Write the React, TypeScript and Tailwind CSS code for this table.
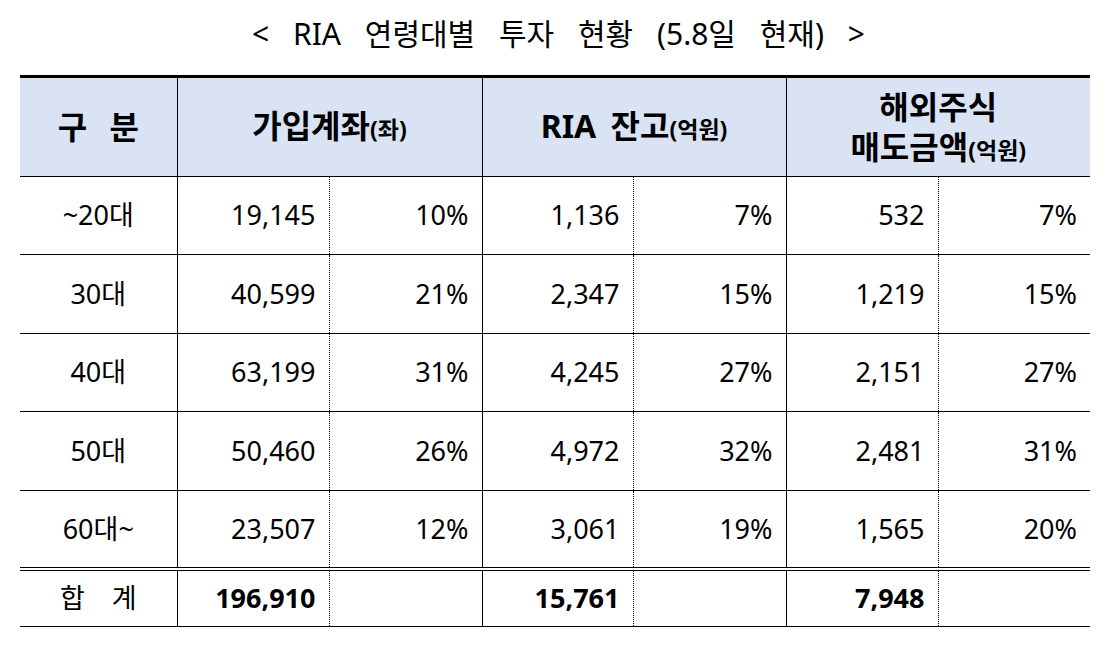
import React from 'react';

type Row = {
  label: string;
  accounts: string;
  accountsPct: string;
  balance: string;
  balancePct: string;
  sales: string;
  salesPct: string;
};

const rows: Row[] = [
  { label: '~20대', accounts: '19,145', accountsPct: '10%', balance: '1,136', balancePct: '7%', sales: '532', salesPct: '7%' },
  { label: '30대', accounts: '40,599', accountsPct: '21%', balance: '2,347', balancePct: '15%', sales: '1,219', salesPct: '15%' },
  { label: '40대', accounts: '63,199', accountsPct: '31%', balance: '4,245', balancePct: '27%', sales: '2,151', salesPct: '27%' },
  { label: '50대', accounts: '50,460', accountsPct: '26%', balance: '4,972', balancePct: '32%', sales: '2,481', salesPct: '31%' },
  { label: '60대~', accounts: '23,507', accountsPct: '12%', balance: '3,061', balancePct: '19%', sales: '1,565', salesPct: '20%' },
];

const font = { fontFamily: '"Noto Sans", "Noto Sans CJK KR", sans-serif' };

export default function App() {
  const num = 'text-right pr-[13px] border-b border-black';
  const solidR = 'border-r border-r-black';
  const dotR = 'border-r border-r-black [border-right-style:dotted]';

  return (
    <div className="w-[1117px] h-[647px] bg-white text-black" style={font}>
      {/* Title */}
      <h1 className="pt-[13px] h-[75px] text-center text-[30px] leading-[42px] font-normal [word-spacing:16px]">
        &lt; RIA 연령대별 투자 현황 (5.8일 현재) &gt;
      </h1>

      <table className="ml-[20px] w-[1070px] table-fixed border-collapse">
        <colgroup>
          <col className="w-[157px]" />
          <col className="w-[152px]" />
          <col className="w-[153px]" />
          <col className="w-[151px]" />
          <col className="w-[153px]" />
          <col className="w-[152px]" />
          <col className="w-[152px]" />
        </colgroup>
        <thead>
          <tr className="h-[100px] bg-[#dae3f3] border-t-[3px] border-t-black font-bold text-[32px] leading-[40px]">
            <th className={`${solidR} border-b border-black [word-spacing:14px]`}>구 분</th>
            <th colSpan={2} className={`${solidR} border-b border-black`}>
              가입계좌<span className="text-[23px]">(좌)</span>
            </th>
            <th colSpan={2} className={`${solidR} border-b border-black [word-spacing:6px]`}>
              RIA 잔고<span className="text-[23px]">(억원)</span>
            </th>
            <th colSpan={2} className="border-b border-black leading-[40px] pt-[2px]">
              해외주식
              <br />
              매도금액<span className="text-[23px]">(억원)</span>
            </th>
          </tr>
        </thead>
        <tbody className="text-[27px]">
          {rows.map((r, i) => (
            <tr key={r.label} className={i === 1 || i === 3 ? 'h-[79px]' : 'h-[78px]'}>
              <td className={`text-center border-b border-black ${solidR}`}>{r.label}</td>
              <td className={`${num} ${dotR}`}>{r.accounts}</td>
              <td className={`${num} ${solidR}`}>{r.accountsPct}</td>
              <td className={`${num} ${dotR}`}>{r.balance}</td>
              <td className={`${num} ${solidR}`}>{r.balancePct}</td>
              <td className={`${num} ${dotR}`}>{r.sales}</td>
              <td className={num}>{r.salesPct}</td>
            </tr>
          ))}
          <tr className="h-[58px] border-t-[4px] border-double border-t-black">
            <td className={`text-center border-b border-black ${solidR} [word-spacing:20px]`}>합 계</td>
            <td className={`${num} ${dotR} font-bold`}>196,910</td>
            <td className={`${num} ${solidR}`}></td>
            <td className={`${num} ${dotR} font-bold`}>15,761</td>
            <td className={`${num} ${solidR}`}></td>
            <td className={`${num} ${dotR} font-bold`}>7,948</td>
            <td className={num}></td>
          </tr>
        </tbody>
      </table>
    </div>
  );
}
